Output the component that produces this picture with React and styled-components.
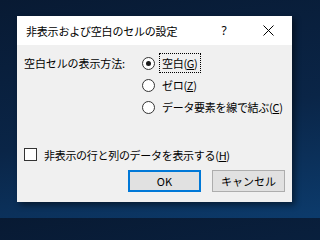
import React from "react";
import styled, { createGlobalStyle } from "styled-components";

const Global = createGlobalStyle`
  html, body { margin: 0; padding: 0; }
  body {
    width: 308px; height: 218px; overflow: hidden;
    background: linear-gradient(170deg, #081a33 0%, #0a2547 55%, #0c3b6c 100%);
    font-family: "Noto Sans CJK JP", "Noto Sans", sans-serif;
  }
`;

const Desk = styled.div`
  width: 308px; height: 218px; box-sizing: border-box;
  padding: 16px 0 0 17px;
`;

const Dialog = styled.div`
  width: 275px; height: 186px;
  background: #f0f0f0;
  display: flex; flex-direction: column;
  box-shadow: 3px 3px 6px rgba(0,0,0,0.45);
`;

const TitleBar = styled.div`
  height: 30px; background: #fff;
  display: flex; align-items: center;
  padding-left: 9px; padding-right: 14px;
  font-size: 11px; color: #000;
`;

const Title = styled.span`
  flex: 1; letter-spacing: -0.2px;
`;

const TitleBtn = styled.span`
  width: ${p => p.$w}px; display: flex; align-items: center; justify-content: center;
  font-family: "Noto Sans", sans-serif; font-size: 12px;
  margin-left: ${p => p.$gap || 0}px;
`;

const Body = styled.div`
  flex: 1;
  padding: 7px 7px 10px 7px;
  display: flex; flex-direction: column;
  font-size: 11px; color: #000;
`;

const Options = styled.div`
  display: grid; grid-template-columns: 118px 1fr;
`;

const Label = styled.div`
  height: 22px; display: flex; align-items: center;
  letter-spacing: -0.1px;
`;

const RadioList = styled.div`
  display: flex; flex-direction: column;
`;

const RadioRow = styled.div`
  height: 22px; display: flex; align-items: center;
`;

const Circle = styled.span`
  width: 11px; height: 11px; border-radius: 50%;
  border: 1px solid #333; background: #fff;
  display: flex; align-items: center; justify-content: center;
  margin-right: 7px; flex: none;
  &::after {
    content: ""; width: 5px; height: 5px; border-radius: 50%;
    background: ${p => (p.$on ? "#1a1a1a" : "transparent")};
  }
`;

const RText = styled.span`
  padding: 1px 2px; margin-left: -2px;
  outline: ${p => (p.$focus ? "1px dotted #000" : "none")};
  line-height: 16px; letter-spacing: -0.3px;
`;

const U = styled.span` text-decoration: underline; text-underline-offset: 1px; `;

const CheckRow = styled.div`
  margin-top: 30px; height: 13px;
  display: flex; align-items: center;
`;

const Box = styled.span`
  width: 11px; height: 11px; border: 1px solid #333; background: #fff;
  margin-right: 7px; flex: none;
`;

const CText = styled.span` letter-spacing: -0.3px; `;

const Buttons = styled.div`
  margin-top: 9px; display: flex; justify-content: flex-end; gap: 11px;
`;

const Button = styled.button`
  width: 73px; height: 22px; box-sizing: border-box;
  background: #e1e1e1;
  border: ${p => (p.$primary ? "2px solid #0078d7" : "1px solid #adadad")};
  font-family: "Noto Sans CJK JP", "Noto Sans", sans-serif;
  font-size: 11px; color: #000; padding: 0;
`;

export default function App() {
  return (
    <Desk>
      <Global />
      <Dialog>
        <TitleBar>
          <Title>非表示および空白のセルの設定</Title>
          <TitleBtn $w={14}>?</TitleBtn>
          <TitleBtn $w={20} $gap={27}>
            <svg width="11" height="11" viewBox="0 0 11 11">
              <path d="M0.5 0.5 L10.5 10.5 M10.5 0.5 L0.5 10.5" stroke="#000" strokeWidth="1" />
            </svg>
          </TitleBtn>
        </TitleBar>
        <Body>
          <Options>
            <Label>空白セルの表示方法:</Label>
            <RadioList>
              <RadioRow><Circle $on /><RText $focus>空白(<U>G</U>)</RText></RadioRow>
              <RadioRow><Circle /><RText>ゼロ(<U>Z</U>)</RText></RadioRow>
              <RadioRow><Circle /><RText>データ要素を線で結ぶ(<U>C</U>)</RText></RadioRow>
            </RadioList>
          </Options>
          <CheckRow><Box /><CText>非表示の行と列のデータを表示する(<U>H</U>)</CText></CheckRow>
          <Buttons>
            <Button $primary>OK</Button>
            <Button>キャンセル</Button>
          </Buttons>
        </Body>
      </Dialog>
    </Desk>
  );
}
